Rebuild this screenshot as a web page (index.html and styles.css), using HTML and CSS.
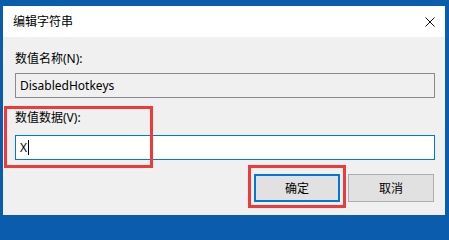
FILE: index.html
```html
<!DOCTYPE html>
<html lang="zh-CN">
<head>
<meta charset="utf-8">
<title>编辑字符串</title>
<link rel="stylesheet" href="styles.css">
</head>
<body>
<div class="window">
  <div class="titlebar">
    <span class="title">编辑字符串</span>
    <svg class="close" width="10" height="10" viewBox="0 0 10 10" aria-hidden="true">
      <path d="M0.5 0.5 L9.5 9.5 M9.5 0.5 L0.5 9.5" stroke="#111" stroke-width="1" fill="none"/>
    </svg>
  </div>
  <div class="content">
    <div class="label label-name">数值名称(N):</div>
    <div class="field field-disabled">DisabledHotkeys</div>
    <div class="label label-data">数值数据(V):</div>
    <div class="field field-active">X<span class="caret"></span></div>
    <div class="buttons">
      <button class="btn btn-default">确定</button>
      <button class="btn">取消</button>
    </div>
  </div>
  <div class="mark mark-data"></div>
  <div class="mark mark-ok"></div>
</div>
</body>
</html>
```
FILE: styles.css
```css
html, body {
  margin: 0;
  padding: 0;
}
body {
  box-sizing: border-box;
  background: #0b5cad;
  font-family: "Noto Sans", "Noto Sans CJK SC", sans-serif;
  font-size: 12px;
  color: #000;
  width: 449px;
  height: 221px;
  padding: 6px 4px 6px 3px;
  overflow: hidden;
}
.window {
  position: relative;
  height: 209px;
  background: #f0f0f0;
  display: flex;
  flex-direction: column;
}
.titlebar {
  height: 31px;
  background: #fff;
  display: flex;
  align-items: center;
  justify-content: space-between;
  padding: 0 10px;
  flex: none;
}
.title {
  line-height: 16px;
}
.close {
  display: block;
}
.content {
  display: flex;
  flex-direction: column;
  padding: 0 10px 0 12px;
}
.label {
  height: 16px;
  line-height: 16px;
}
.label-name {
  margin-top: 14px;
}
.label-data {
  margin-top: 12px;
}
.field {
  box-sizing: border-box;
  height: 25px;
  line-height: 23px;
  padding-left: 4px;
  display: flex;
  align-items: center;
}
.field-disabled {
  margin-top: 6px;
  background: #f0f0f0;
  border: 1px solid #8a8a8a;
}
.field-active {
  margin-top: 9px;
  background: #fff;
  border: 1px solid #0078d7;
}
.caret {
  display: inline-block;
  width: 0;
  height: 15px;
  border-left: 1px solid #000;
  margin-left: 1px;
}
.buttons {
  margin-top: 14px;
  display: flex;
  justify-content: flex-end;
  gap: 8px;
  padding-right: 1px;
}
.btn {
  box-sizing: border-box;
  width: 86px;
  height: 28px;
  background: #e1e1e1;
  border: 1px solid #adadad;
  font-family: "Noto Sans", "Noto Sans CJK SC", sans-serif;
  font-size: 12px;
  color: #000;
  padding: 0;
  margin: 0;
}
.btn-default {
  border: 2px solid #0078d7;
}
.mark {
  position: absolute;
  border: 3px solid #f03a3a;
  box-sizing: border-box;
}
.mark-data {
  left: 1px;
  top: 100px;
  width: 149px;
  height: 62px;
}
.mark-ok {
  left: 245px;
  top: 159px;
  width: 98px;
  height: 43px;
}
```
